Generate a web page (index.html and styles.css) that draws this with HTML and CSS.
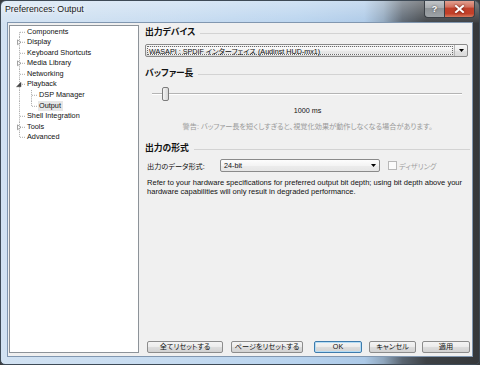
FILE: index.html
```html
<!DOCTYPE html>
<html lang="ja">
<head>
<meta charset="utf-8">
<title>Preferences: Output</title>
<link rel="stylesheet" href="styles.css">
</head>
<body>
<div class="window">
  <div class="titlebar">
    <span class="title">Preferences: Output</span>
    <div class="caption">
      <span class="cap-help">?</span>
      <span class="cap-close"><svg width="11" height="8" viewBox="0 0 11 8"><path d="M2 1 L9 7 M9 1 L2 7" stroke="#fff" stroke-width="2" stroke-linecap="square"/></svg></span>
    </div>
  </div>
  <div class="client">
    <div class="tree">
      <div class="node"><svg class="gut" viewBox="0 0 16 11" preserveAspectRatio="none"><path d="M9.5 5.5V11M10 5.5H16" class="dl"/></svg><span class="lbl">Components</span></div>
      <div class="node"><svg class="gut" viewBox="0 0 16 11" preserveAspectRatio="none"><path d="M9.5 0V11M10 5.5H16" class="dl"/><path d="M7.5 3L11 5.5L7.5 8Z" class="tri-c"/></svg><span class="lbl">Display</span></div>
      <div class="node"><svg class="gut" viewBox="0 0 16 11" preserveAspectRatio="none"><path d="M9.5 0V11M10 5.5H16" class="dl"/></svg><span class="lbl">Keyboard Shortcuts</span></div>
      <div class="node"><svg class="gut" viewBox="0 0 16 11" preserveAspectRatio="none"><path d="M9.5 0V11M10 5.5H16" class="dl"/><path d="M7.5 3L11 5.5L7.5 8Z" class="tri-c"/></svg><span class="lbl">Media Library</span></div>
      <div class="node"><svg class="gut" viewBox="0 0 16 11" preserveAspectRatio="none"><path d="M9.5 0V11M10 5.5H16" class="dl"/></svg><span class="lbl">Networking</span></div>
      <div class="node"><svg class="gut" viewBox="0 0 16 11" preserveAspectRatio="none"><path d="M9.5 0V11M10 5.5H16" class="dl"/><path d="M11 3.5L11 8L6.5 8Z" class="tri-e"/></svg><span class="lbl">Playback</span></div>
      <div class="node child"><svg class="gut2" viewBox="0 0 28 11" preserveAspectRatio="none"><path d="M9.5 0V11M21.5 0V11M22 5.5H28" class="dl"/></svg><span class="lbl">DSP Manager</span></div>
      <div class="node child"><svg class="gut2" viewBox="0 0 28 11" preserveAspectRatio="none"><path d="M9.5 0V11M21.5 0V5.5M22 5.5H27" class="dl"/></svg><span class="lbl sel">Output</span></div>
      <div class="node"><svg class="gut" viewBox="0 0 16 11" preserveAspectRatio="none"><path d="M9.5 0V11M10 5.5H16" class="dl"/></svg><span class="lbl">Shell Integration</span></div>
      <div class="node"><svg class="gut" viewBox="0 0 16 11" preserveAspectRatio="none"><path d="M9.5 0V11M10 5.5H16" class="dl"/><path d="M7.5 3L11 5.5L7.5 8Z" class="tri-c"/></svg><span class="lbl">Tools</span></div>
      <div class="node"><svg class="gut" viewBox="0 0 16 11" preserveAspectRatio="none"><path d="M9.5 0V5.5M10 5.5H16" class="dl"/></svg><span class="lbl">Advanced</span></div>
    </div>

    <div class="pane">
      <div class="group-head h1"><span>出力デバイス</span></div>
      <div class="combo device focused">
        <span class="combo-text"><span class="focus-rect">WASAPI : SPDIF インターフェイス (Audinst HUD-mx1)</span></span>
        <span class="combo-arrow sep"><svg width="5" height="3" viewBox="0 0 5 3"><path d="M0 0H5L2.5 3Z" fill="#000"/></svg></span>
      </div>

      <div class="group-head h2"><span>バッファー長</span></div>
      <div class="slider">
        <div class="track"></div>
        <div class="thumb" style="left: 3.1%"></div>
      </div>
      <div class="value">1000 ms</div>
      <div class="warn">警告: バッファー長を短くしすぎると、視覚化効果が動作しなくなる場合があります。</div>

      <div class="group-head h3"><span>出力の形式</span></div>
      <div class="format-row">
        <span class="flabel">出力のデータ形式:</span>
        <div class="combo bits">
          <span class="combo-text">24-bit</span>
          <span class="combo-arrow"><svg width="5" height="3" viewBox="0 0 5 3"><path d="M0 0H5L2.5 3Z" fill="#000"/></svg></span>
        </div>
        <label class="check"><span class="box"></span><span class="check-text">ディザリング</span></label>
      </div>
      <p class="desc">Refer to your hardware specifications for preferred output bit depth; using bit depth above your hardware capabilities will only result in degraded performance.</p>

      <div class="buttons">
        <button class="btn b-all">全てリセットする</button>
        <button class="btn b-page">ページをリセットする</button>
        <button class="btn b-ok default">OK</button>
        <button class="btn b-cancel">キャンセル</button>
        <button class="btn b-apply">適用</button>
      </div>
    </div>
  </div>
</div>
</body>
</html>
```

FILE: styles.css
```css
html, body {
  margin: 0;
  padding: 0;
}
body {
  width: 480px;
  height: 365px;
  overflow: hidden;
  background: #3a3c3f;
  font-family: "Liberation Sans", "Noto Sans CJK JP", sans-serif;
  font-feature-settings: "palt";
  color: #111;
}

.window {
  box-sizing: border-box;
  width: 480px;
  height: 365px;
  border: 1px solid #3e4a56;
  border-radius: 6px 6px 5px 5px;
  overflow: hidden;
  display: flex;
  flex-direction: column;
  background:
    linear-gradient(180deg, rgba(255,255,255,0.35) 0px, rgba(255,255,255,0.05) 21px, rgba(255,255,255,0) 22px),
    linear-gradient(90deg, #d2e2f2 0%, #c6dbf0 35%, #b8d3ee 62%, #acc9e7 76%, #8fa6bd 80%, #596470 84%, #3d4145 89%, #36383b 100%);
}

/* title bar */
.titlebar {
  height: 21px;
  flex: none;
  display: flex;
  align-items: flex-start;
}
.title {
  margin: 3px 0 0 4px;
  font-size: 8.8px;
  line-height: 11px;
  color: #181818;
  text-shadow: 0 0 4px #fff, 0 0 6px #fff;
}
.caption {
  margin-left: auto;
  margin-right: 4px;
  margin-top: -1px;
  display: flex;
}
.cap-help, .cap-close {
  box-sizing: border-box;
  height: 18px;
  display: flex;
  align-items: center;
  justify-content: center;
  border: 1px solid #3a3f45;
  border-top: none;
}
.cap-help {
  width: 20px;
  border-radius: 0 0 0 4px;
  border-right: none;
  background: linear-gradient(180deg, #c5c8cb 0%, #a9adb1 45%, #8e9397 50%, #9ea3a7 100%);
  color: #fff;
  font-family: "Liberation Sans", sans-serif;
  font-weight: bold;
  font-size: 9px;
  text-shadow: 0 0 2px #333;
}
.cap-close {
  width: 31px;
  border-radius: 0 0 4px 0;
  background: linear-gradient(180deg, #e4a898 0%, #d27260 40%, #c0402a 50%, #c23f28 80%, #d67a5e 100%);
}
.cap-close svg { filter: drop-shadow(0 0 1px #5a1a10); }

/* client */
.client {
  flex: 1;
  margin: 0 6px 7px 6px;
  background: #f0f0f0;
  border: 1px solid #8197b0;
  display: flex;
  padding: 1px 2px 3px 1px;
  gap: 6px;
  min-height: 0;
}

/* tree */
.tree {
  box-sizing: border-box;
  width: 130px;
  margin-top: 1px;
  border: 1px solid #8d9399;
  background: #fff;
  font-size: 7.3px;
  padding-top: 0.5px;
}
.node {
  height: 10.6px;
  display: flex;
  align-items: center;
}
.gut { width: 16px; height: 10.6px; flex: none; }
.gut2 { width: 28px; height: 10.6px; flex: none; }
.dl { stroke: #a8a8a8; stroke-width: 1; stroke-dasharray: 1 1; fill: none; }
.tri-c { fill: #fff; stroke: #8a8a8a; stroke-width: 0.8; }
.tri-e { fill: #454545; stroke: #454545; stroke-width: 0.5; }
.lbl {
  padding: 0 1px;
  line-height: 10.6px;
  white-space: nowrap;
}
.lbl.sel {
  background: #e6e6e6;
  padding: 0 2px 0 1px;
}

/* right pane */
.pane {
  flex: 1;
  display: flex;
  flex-direction: column;
  min-width: 0;
}
.group-head {
  display: flex;
  align-items: center;
  font-weight: bold;
  font-size: 8.8px;
  line-height: 11px;
  height: 11px;
  gap: 5px;
}
.group-head::after {
  content: "";
  flex: 1;
  height: 1px;
  background: #d3d3d3;
  margin-top: 1px;
}
.h1 { margin-top: 3px; }
.h2 { margin-top: 11px; }
.h3 { margin-top: 12px; }

.combo {
  box-sizing: border-box;
  height: 13px;
  border: 1px solid #8a8a8a;
  border-radius: 2px;
  background: linear-gradient(180deg, #f6f6f6 0%, #ececec 50%, #e2e2e2 51%, #dadada 100%);
  display: flex;
  align-items: stretch;
  font-size: 7.2px;
}
.combo.device {
  margin-top: 6px;
  margin-right: 2px;
}
.combo-text {
  flex: 1;
  display: flex;
  align-items: center;
  padding: 1px;
  white-space: nowrap;
  overflow: hidden;
}
.focus-rect {
  flex: 1;
  align-self: stretch;
  display: flex;
  align-items: center;
  padding-left: 1px;
  border: 1px dotted #6a6a6a;
  background: linear-gradient(180deg, #fbfbfb 0%, #f1f1f1 50%, #e9e9e9 51%, #e4e4e4 100%);
}
.combo-arrow {
  width: 12px;
  display: flex;
  align-items: center;
  justify-content: center;
}
.combo-arrow.sep {
  border-left: 1px solid #b5b5b5;
}

.slider {
  position: relative;
  height: 14px;
  margin: 8px 8px 0 7px;
  display: flex;
  align-items: center;
}
.track {
  flex: 1;
  height: 1px;
  background: #b4b4b4;
  border-bottom: 1px solid #fff;
}
.thumb {
  position: absolute;
  top: 0;
  box-sizing: border-box;
  width: 7px;
  height: 14px;
  border: 1px solid #7c7c7c;
  border-radius: 2px;
  background: linear-gradient(90deg, #f4f4f4 0%, #e6e6e6 50%, #d6d6d6 100%);
}

.value {
  margin-top: 5px;
  text-align: center;
  font-size: 7.2px;
  line-height: 9px;
}
.warn {
  margin-top: 7px;
  text-align: center;
  font-size: 7.2px;
  line-height: 9px;
  color: #9a9a9a;
}

.format-row {
  display: flex;
  align-items: center;
  margin-top: 5px;
  font-size: 7.2px;
}
.flabel {
  width: 75px;
  padding-left: 2px;
  box-sizing: border-box;
}
.combo.bits {
  width: 160px;
  background: linear-gradient(180deg, #fdfdfd 0%, #f4f4f4 50%, #ececec 51%, #e6e6e6 100%);
}
.combo.bits .combo-text { padding-left: 3px; }
.check {
  display: flex;
  align-items: center;
  margin-left: 8px;
  color: #a0a0a0;
}
.box {
  box-sizing: border-box;
  width: 9px;
  height: 9px;
  border: 1px solid #b8b8b8;
  background: #fbfbfb;
  margin-right: 2px;
}

.desc {
  margin: 7px 0 0 0;
  padding-left: 2px;
  font-size: 7.55px;
  line-height: 8.6px;
  width: 322px;
}

.buttons {
  margin-top: auto;
  display: flex;
  padding-left: 2px;
}
.btn {
  box-sizing: border-box;
  height: 12px;
  padding: 0;
  border: 1px solid #8c8c8c;
  border-radius: 2px;
  background: linear-gradient(180deg, #f4f4f4 0%, #ebebeb 50%, #dddddd 51%, #d2d2d2 100%);
  font-family: "Liberation Sans", "Noto Sans CJK JP", sans-serif;
  font-feature-settings: "palt";
  font-size: 7.2px;
  line-height: 10px;
  color: #111;
}
.btn.default {
  border-color: #3d7bad;
  box-shadow: inset 0 0 0 1px #b5dcf4;
}
.b-all { width: 76px; }
.b-page { width: 72px; margin-left: 8px; }
.b-ok { width: 48px; margin-left: 11px; }
.b-cancel { width: 47px; margin-left: 7px; }
.b-apply { width: 48px; margin-left: 6px; }
```
